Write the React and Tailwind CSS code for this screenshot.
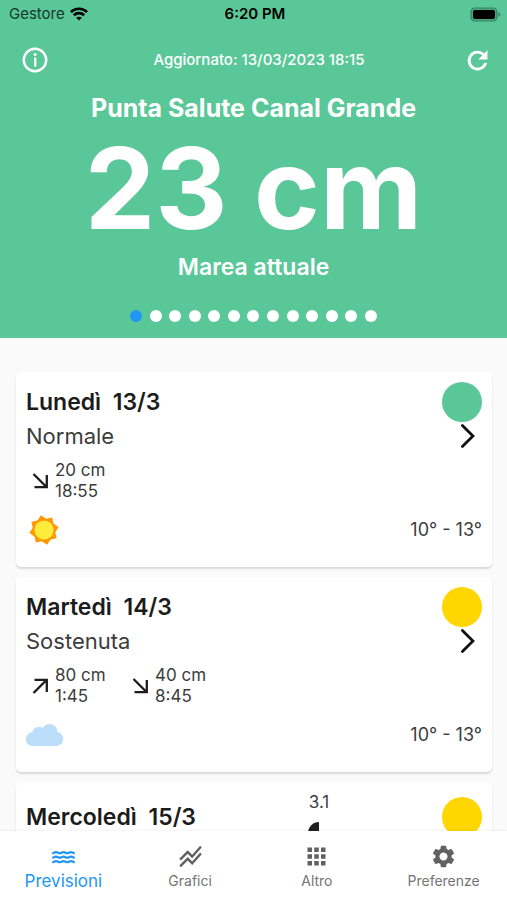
import { MdWater, MdStackedLineChart, MdApps, MdSettings } from "react-icons/md";

function WifiIcon() {
  return (
    <svg viewBox="0 0 18 14" className="h-[14px] w-[18px]" fill="none" stroke="black" strokeWidth="2.6" aria-hidden="true">
      <path d="M0.9 5.1C5.4 0.7 12.6 0.7 17.1 5.1" />
      <path d="M3.8 8.2C6.7 5.4 11.3 5.4 14.2 8.2" />
      <path d="M9 13.4L6.2 10.7C7.8 9.3 10.2 9.3 11.8 10.7Z" fill="black" stroke="none" />
    </svg>
  );
}

function BatteryIcon() {
  return (
    <svg viewBox="0 0 31 15" className="h-[15px] w-[31px]" aria-hidden="true">
      <rect x="1" y="1" width="26" height="13" rx="4" fill="#4aa67f" stroke="#388062" strokeWidth="1.2" />
      <rect x="3" y="3" width="22" height="9" rx="2" fill="black" />
      <path d="M28.5 5C30.8 6 30.8 9 28.5 10Z" fill="#388062" />
    </svg>
  );
}

function InfoIcon() {
  return (
    <svg viewBox="0 0 30 30" className="size-[30px]" fill="none" stroke="currentColor" strokeWidth="2.4" aria-hidden="true">
      <circle cx="15" cy="15" r="11.2" />
      <path d="M15.2 13.4V20.6" strokeLinecap="round" />
      <circle cx="15.1" cy="9.6" r="1.5" fill="currentColor" stroke="none" />
    </svg>
  );
}

function RefreshIcon() {
  return (
    <svg viewBox="0 0 24 24" className="size-[29px]" aria-hidden="true">
      <path d="M16.9 7A7 7 0 1 0 18.8 14" fill="none" stroke="currentColor" strokeWidth="2.4" />
      <path d="M20.2 3.6V11.2H12.6Z" fill="currentColor" />
    </svg>
  );
}

function ArrowIcon({ rising }) {
  return (
    <svg viewBox="0 0 22 22" className="size-[22px]" fill="none" stroke="#1c1c1c" strokeWidth="2.3" role="img" aria-label={rising ? "In aumento" : "In calo"}>
      {rising ? <path d="M4.5 18L17 5.5M5.5 4.8H17.8V17" /> : <path d="M4.5 4L17 16.5M5.5 17.2H17.8V5" />}
    </svg>
  );
}

function SunIcon() {
  return (
    <svg viewBox="-15 -15 30 30" className="mx-[3px] size-[30px]" role="img" aria-label="Sereno">
      <g fill="#ff9800" transform="rotate(-12)">
        <rect x="-10.6" y="-10.6" width="21.2" height="21.2" />
        <rect x="-10.6" y="-10.6" width="21.2" height="21.2" transform="rotate(45)" />
      </g>
      <circle r="9.6" fill="#ffeb3b" />
    </svg>
  );
}

function CloudIcon() {
  return (
    <svg viewBox="0 0 37 22" className="h-[22px] w-[37px]" fill="#bbdefb" role="img" aria-label="Nuvoloso">
      <rect y="9" width="37" height="13" rx="6.5" />
      <circle cx="13" cy="9.5" r="6.8" />
      <circle cx="23.5" cy="7.8" r="7.8" />
      <circle cx="30" cy="14.8" r="7" />
      <circle cx="7" cy="15" r="7" />
    </svg>
  );
}

function ChevronIcon() {
  return (
    <svg viewBox="0 0 16 26" className="h-[26px] w-4" fill="none" stroke="#111" strokeWidth="2.8" aria-hidden="true">
      <path d="M2.4 2.4L13 13L2.4 23.6" strokeLinecap="round" />
    </svg>
  );
}

function MoonIcon() {
  return (
    <svg viewBox="0 0 22 22" className="size-[22px] shrink-0" role="img" aria-label="Ultimo quarto">
      <path d="M11 0A11 11 0 0 0 11 22Z" fill="#212121" />
    </svg>
  );
}

const days = [
  {
    name: "Lunedì",
    date: "13/3",
    level: "Normale",
    dot: "bg-[#5ac799]",
    tides: [{ rising: false, height: "20 cm", time: "18:55" }],
    Weather: SunIcon,
  },
  {
    name: "Martedì",
    date: "14/3",
    level: "Sostenuta",
    dot: "bg-[#ffd600]",
    tides: [
      { rising: true, height: "80 cm", time: "1:45" },
      { rising: false, height: "40 cm", time: "8:45" },
    ],
    Weather: CloudIcon,
  },
  { name: "Mercoledì", date: "15/3", dot: "bg-[#ffd600]", moon: "3.1" },
];

function Tide({ tide }) {
  return (
    <li className="flex w-[100px] items-center gap-1 pl-[3px]">
      <ArrowIcon rising={tide.rising} />
      <div>
        <p>{tide.height}</p>
        <p>{tide.time}</p>
      </div>
    </li>
  );
}

function DayCard({ day }) {
  return (
    <article className="rounded-[5px] bg-white p-[10px] pb-[17px] shadow-[0_2px_2px_rgba(0,0,0,0.13)]">
      <header className="flex items-center">
        <h2 className="flex-1 text-[23px] leading-[30px] font-semibold whitespace-pre text-[#1c1c1c]">
          {day.name}{"  "}{day.date}
        </h2>
        {day.moon && (
          <div className="mr-[112px] flex h-[50px] flex-col items-center gap-[10px] text-[17px] leading-5">
            <span>{day.moon}</span>
            <MoonIcon />
          </div>
        )}
        <span className={`size-10 rounded-full ${day.dot}`} />
      </header>
      {day.level && (
        <>
          <button type="button" className="flex w-full items-center justify-between pr-[6px] text-left text-[22px] leading-7">
            {day.level}
            <ChevronIcon />
          </button>
          <ul className="mt-[10px] flex text-[17px] leading-[21px]">
            {day.tides.map((tide) => (
              <Tide key={tide.time} tide={tide} />
            ))}
          </ul>
          <div className="mt-2 flex h-10 items-center justify-between text-lg">
            <day.Weather />
            <p>10° - 13°</p>
          </div>
        </>
      )}
    </article>
  );
}

const tabs = [
  { label: "Previsioni", Icon: MdWater, active: true },
  { label: "Grafici", Icon: MdStackedLineChart },
  { label: "Altro", Icon: MdApps },
  { label: "Preferenze", Icon: MdSettings },
];

export default function App() {
  return (
    <div className="flex h-screen flex-col overflow-hidden bg-[#fafafa] font-[Inter,sans-serif] text-[#3c3c3c]">
      <div className="shrink-0 bg-[#5ac799] text-white">
        <div className="grid h-7 grid-cols-3 items-center pr-[6px] pl-[9px] text-[15px] text-black">
          <div className="flex items-center gap-[5px] text-[#14392a]">
            Gestore
            <WifiIcon />
          </div>
          <time className="text-center font-semibold">6:20 PM</time>
          <div className="flex justify-end">
            <BatteryIcon />
          </div>
        </div>
        <div className="flex h-16 items-center justify-between px-5">
          <button type="button" aria-label="Informazioni">
            <InfoIcon />
          </button>
          <p className="pl-[5px] text-[15px] font-medium">Aggiornato: 13/03/2023 18:15</p>
          <button type="button" aria-label="Aggiorna" className="-mr-[5px]">
            <RefreshIcon />
          </button>
        </div>
        <section className="flex flex-col items-center">
          <h1 className="text-[25px] leading-8 font-bold">Punta Salute Canal Grande</h1>
          <p className="text-[112px] leading-[128px] font-bold">23 cm</p>
          <p className="mt-[2px] text-[23px] leading-[26px] font-semibold">Marea attuale</p>
          <div className="flex w-[247px] justify-between pt-[30px] pb-4">
            {Array.from({ length: 13 }, (_, i) => (
              <button
                key={i}
                type="button"
                aria-label={`Stazione ${i + 1}`}
                className={`size-3 rounded-full ${i === 0 ? "bg-[#2196f3]" : "bg-white"}`}
              />
            ))}
          </div>
        </section>
      </div>
      <main className="flex min-h-0 flex-1 flex-col gap-[10px] overflow-hidden px-4 pt-[34px] pr-[15px]">
        {days.map((day) => (
          <DayCard key={day.name} day={day} />
        ))}
      </main>
      <nav className="z-10 grid h-[69px] shrink-0 grid-cols-4 bg-white shadow-[0_-1px_2px_rgba(0,0,0,0.05)]">
        {tabs.map(({ label, Icon, active }) => (
          <button
            key={label}
            type="button"
            className={`flex flex-col items-center pt-3 ${active ? "text-[17px] text-[#2196f3]" : "text-sm text-[#757575]"}`}
          >
            <Icon className={`size-[27px] ${active ? "" : "text-[#616161]"}`} />
            <span className="leading-[22px]">{label}</span>
          </button>
        ))}
      </nav>
    </div>
  );
}
